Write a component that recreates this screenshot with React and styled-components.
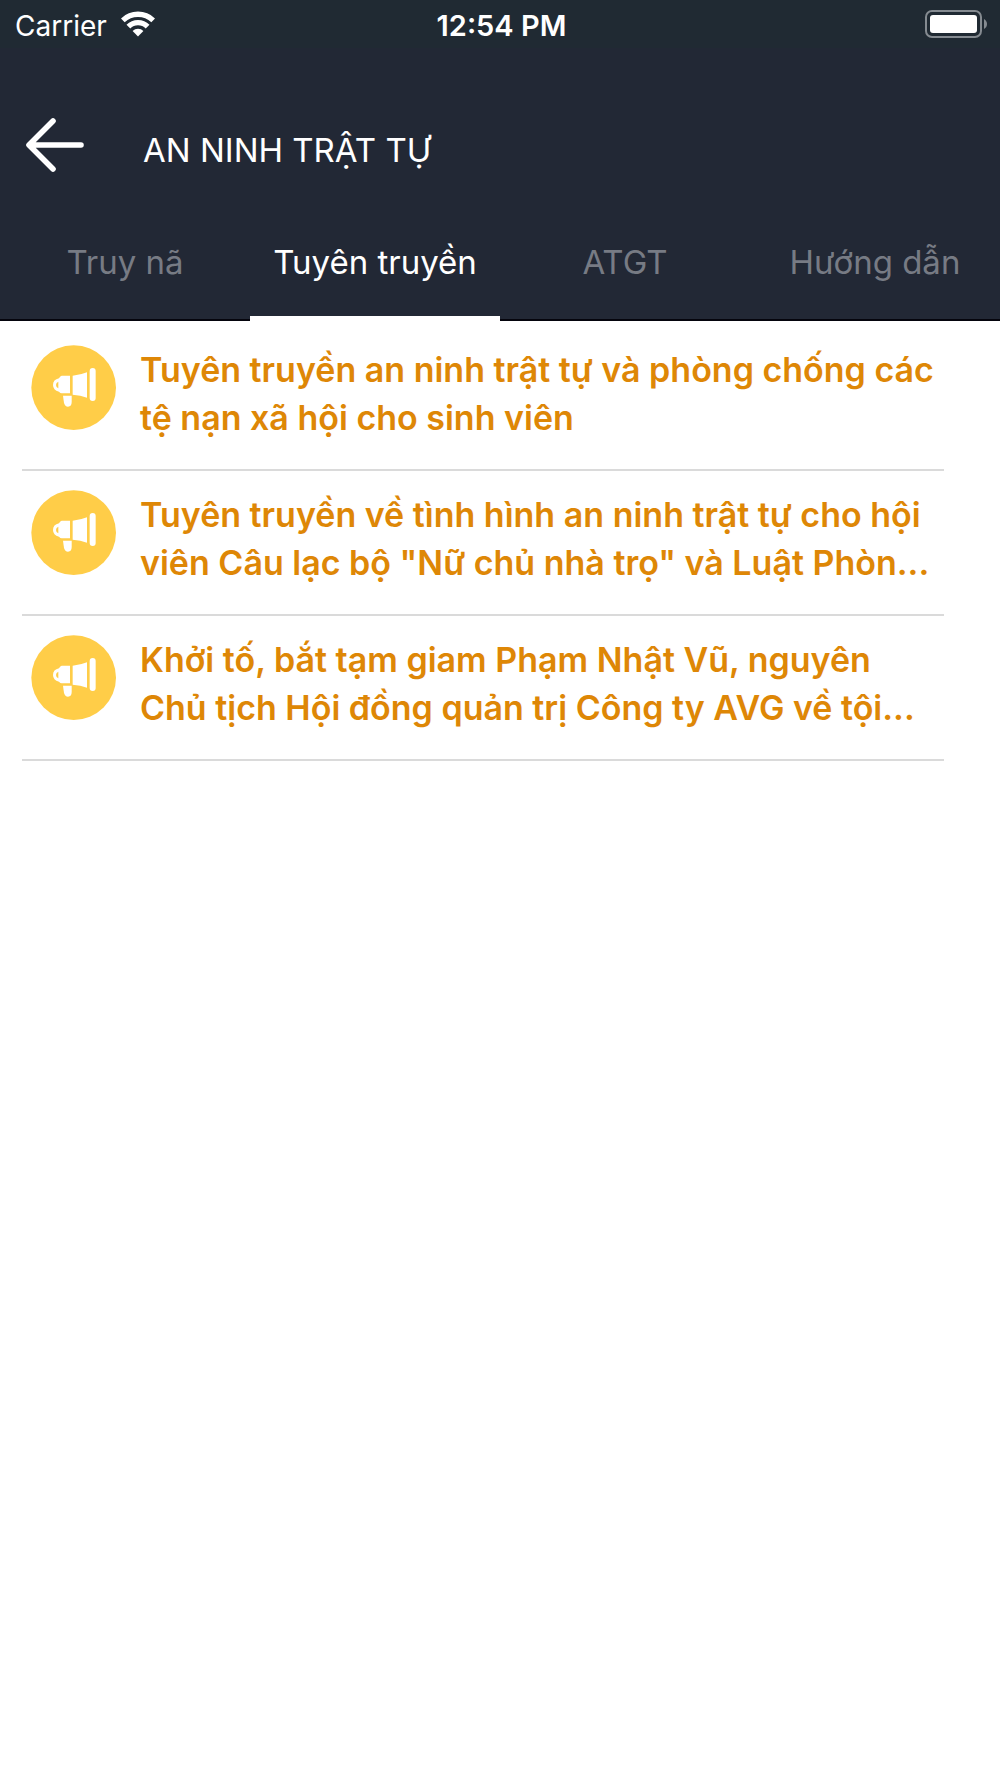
import React, { useState } from "react";
import styled, { createGlobalStyle } from "styled-components";

const GlobalStyle = createGlobalStyle`
  * {
    box-sizing: border-box;
  }

  body {
    margin: 0;
    background: #fff;
    font-family: Inter, "Noto Sans", sans-serif;
  }
`;

const StatusBar = styled.div`
  display: grid;
  grid-template-columns: 1fr auto 1fr;
  align-items: center;
  height: 48px;
  padding: 0 12px 0 15px;
  background: #202a33;
  color: #fff;
`;

const Carrier = styled.div`
  display: flex;
  align-items: center;
  gap: 14px;
`;

const StatusText = styled.span`
  padding-top: 3px;
  font-size: ${(props) => (props.$strong ? "29px" : "28px")};
  font-weight: ${(props) => (props.$strong ? 600 : 400)};
  line-height: 40px;
`;

const BatteryIcon = styled.svg`
  justify-self: end;
`;

const Header = styled.header`
  background: #222835;
  color: #fff;
`;

const TitleBar = styled.div`
  display: flex;
  align-items: center;
  gap: 55px;
  height: 153px;
  padding: 40px 22px 0;
`;

const BackButton = styled.button`
  display: flex;
  padding: 0;
  border: 0;
  background: none;
  color: inherit;
  cursor: pointer;
`;

const Title = styled.h1`
  margin: 10px 0 0;
  font-size: 33px;
  font-weight: 400;
  line-height: 48px;
`;

const Tabs = styled.div`
  display: flex;
`;

const Tab = styled.button`
  flex: 1;
  height: 120px;
  padding: 2px 0 0;
  border: 0;
  background: none;
  box-shadow: inset 0
    ${(props) => (props.$active ? "-5px #fff" : "-2px #05050d")};
  color: ${(props) => (props.$active ? "#fff" : "#777b84")};
  font-family: inherit;
  font-size: 33px;
  line-height: 48px;
  cursor: pointer;
`;

const NewsList = styled.ul`
  margin: 0 56px 0 22px;
  padding: 5px 0 0;
  list-style: none;
`;

const NewsItem = styled.li`
  border-bottom: 2px solid #dadada;
`;

const NewsLink = styled.a`
  display: flex;
  align-items: flex-start;
  gap: 24px;
  padding: 19px 6px 27px 9px;
  color: #de8706;
  font-size: 34px;
  font-weight: 600;
  line-height: 48px;
  text-decoration: none;
`;

const Badge = styled.svg`
  flex-shrink: 0;
`;

const Headline = styled.span`
  flex: 1;
  padding-top: 1px;
`;

const tabs = ["Truy nã", "Tuyên truyền", "ATGT", "Hướng dẫn"];

const news = [
  "Tuyên truyền an ninh trật tự và phòng chống các tệ nạn xã hội cho sinh viên",
  'Tuyên truyền về tình hình an ninh trật tự cho hội viên Câu lạc bộ "Nữ chủ nhà trọ" và Luật Phòn...',
  "Khởi tố, bắt tạm giam Phạm Nhật Vũ, nguyên Chủ tịch Hội đồng quản trị Công ty AVG về tội...",
];

const Wifi = () => (
  <svg width="34" height="26" viewBox="0 0 34 26" aria-hidden="true">
    <g fill="none" stroke="#fff" strokeWidth="5.4">
      <path d="M1.8 9.4a22 22 0 0 1 30.4 0" />
      <path d="M7.4 15.6a13.6 13.6 0 0 1 19.2 0" />
    </g>
    <path d="M11.6 20a7.4 7.4 0 0 1 10.8 0L17 25.5z" fill="#fff" />
  </svg>
);

const Battery = () => (
  <BatteryIcon width="63" height="28" viewBox="0 0 63 28" aria-hidden="true">
    <rect
      x="1"
      y="1"
      width="55"
      height="26"
      rx="6"
      fill="none"
      stroke="#858b91"
      strokeWidth="2"
    />
    <rect x="5" y="5" width="47" height="18" rx="3" fill="#fff" />
    <path d="M59 9c4 2 4 8 0 10z" fill="#858b91" />
  </BatteryIcon>
);

const BackArrow = () => (
  <svg width="66" height="58" viewBox="0 0 66 58" aria-hidden="true">
    <path
      d="M31 5 7 29l24 24M9 29h50"
      fill="none"
      stroke="currentColor"
      strokeWidth="5.6"
      strokeLinecap="round"
      strokeLinejoin="round"
    />
  </svg>
);

const Megaphone = () => (
  <Badge width="85" height="85" viewBox="0 0 255 255" aria-hidden="true">
    <circle cx="128" cy="128" r="127" fill="#ffcd48" />
    <g fill="#fff">
      <rect x="176" y="69" width="18" height="99" rx="9" />
      <path d="M125 92q24-2 43-10v76q-19-8-43-9z" />
      <path
        fillRule="evenodd"
        d="M92 92h25v53H92q-4 0-8-5-18-4-18-20t18-20q4-8 8-8zM82 110q-7 2-7 10t7 10z"
      />
      <path d="M96 152h26v19q0 14-11 14-9 0-12-11z" />
    </g>
  </Badge>
);

const App = () => {
  const [active, setActive] = useState(1);

  return (
    <>
      <GlobalStyle />
      <StatusBar>
        <Carrier>
          <StatusText>Carrier</StatusText>
          <Wifi />
        </Carrier>
        <StatusText $strong>12:54 PM</StatusText>
        <Battery />
      </StatusBar>
      <Header>
        <TitleBar>
          <BackButton type="button" aria-label="Quay lại">
            <BackArrow />
          </BackButton>
          <Title>AN NINH TRẬT TỰ</Title>
        </TitleBar>
        <Tabs role="tablist">
          {tabs.map((label, index) => (
            <Tab
              key={label}
              type="button"
              role="tab"
              aria-selected={index === active}
              $active={index === active}
              onClick={() => setActive(index)}
            >
              {label}
            </Tab>
          ))}
        </Tabs>
      </Header>
      <NewsList>
        {news.map((headline) => (
          <NewsItem key={headline}>
            <NewsLink href="#">
              <Megaphone />
              <Headline>{headline}</Headline>
            </NewsLink>
          </NewsItem>
        ))}
      </NewsList>
    </>
  );
};

export default App;
